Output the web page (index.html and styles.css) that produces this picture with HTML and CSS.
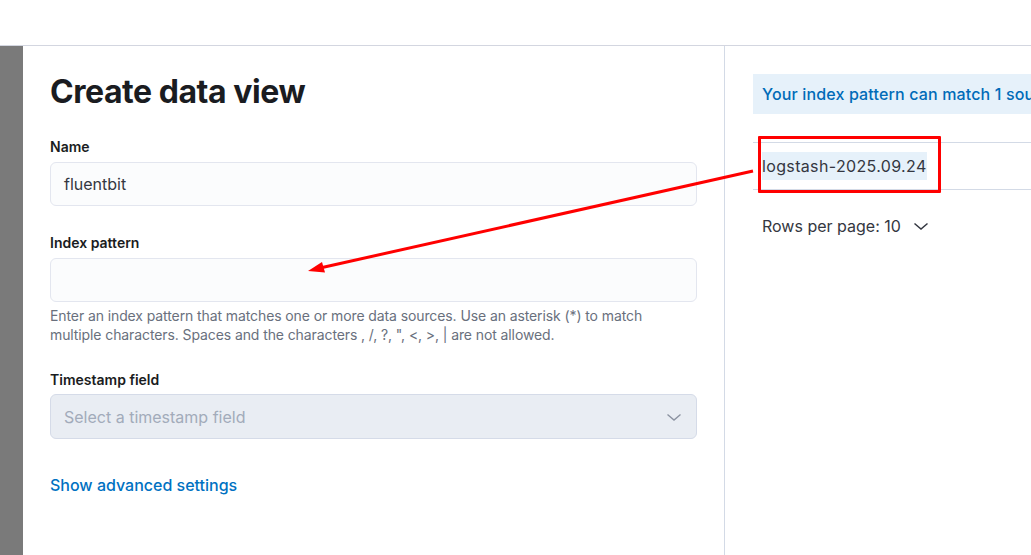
FILE: index.html
```html
<!DOCTYPE html>
<html>
<head>
<meta charset="utf-8">
<link rel="stylesheet" href="styles.css">
</head>
<body>
<div class="topbar"></div>
<div class="main">
  <div class="gutter"></div>
  <div class="panel">
    <div class="left">
      <h1 class="title">Create data view</h1>
      <div class="field first">
        <div class="label">Name</div>
        <div class="input">fluentbit</div>
      </div>
      <div class="field">
        <div class="label">Index pattern</div>
        <div class="input"></div>
        <div class="help">Enter an index pattern that matches one or more data sources. Use an asterisk (*) to match<br>multiple characters. Spaces and the characters , /, ?, ", &lt;, &gt;, | are not allowed.</div>
      </div>
      <div class="field ts">
        <div class="label">Timestamp field</div>
        <div class="select">
          <span>Select a timestamp field</span>
          <svg class="chev" width="16" height="16" viewBox="0 0 16 16"><path d="M1.5 5.5 L8 11 L14.5 5.5" fill="none" stroke="#8c93a1" stroke-width="1.4"/></svg>
        </div>
      </div>
      <a class="link">Show advanced settings</a>
    </div>
    <div class="right">
      <div class="callout">Your index pattern can match 1 source.</div>
      <div class="table">
        <div class="row"><span class="hl">logstash-2025.09.24</span></div>
      </div>
      <div class="rows">Rows per page: 10
        <svg class="chev2" width="16" height="16" viewBox="0 0 16 16"><path d="M1.5 5.5 L8 11 L14.5 5.5" fill="none" stroke="#343741" stroke-width="1.5"/></svg>
      </div>
    </div>
  </div>
</div>
<div class="redbox"></div>
<svg class="arrow" width="1031" height="555" viewBox="0 0 1031 555">
  <line x1="753" y1="171" x2="320" y2="268" stroke="#ff0000" stroke-width="3"/>
  <polygon points="308,271 325,272.5 322,262" fill="#ff0000"/>
</svg>
</body>
</html>
```

FILE: styles.css
```css
* { box-sizing: border-box; }
html, body { margin: 0; padding: 0; }
body {
  width: 1031px;
  height: 555px;
  overflow: hidden;
  position: relative;
  font-family: Inter, "Liberation Sans", sans-serif;
  background: #ffffff;
  color: #343741;
}
.topbar {
  height: 46px;
  border-bottom: 1px solid #d3d6e0;
  background: #fff;
}
.main {
  display: flex;
  height: 509px;
}
.gutter {
  width: 23px;
  background: #7a7a7a;
}
.panel {
  flex: 1;
  display: flex;
  background: #fff;
  min-width: 0;
}
.left {
  width: 702px;
  border-right: 1px solid #d3dae6;
  padding: 26px 27px 0 27px;
}
.title {
  margin: 0;
  font-size: 32px;
  line-height: 40px;
  font-weight: 700;
  color: #1a1c21;
  letter-spacing: -0.45px;
}
.field { margin-top: 27px; }
.field.first { margin-top: 25px; }
.field.ts { margin-top: 26px; }
.label {
  font-size: 14px;
  line-height: 20px;
  font-weight: 600;
  color: #1a1c21;
}
.input {
  margin-top: 5px;
  height: 44px;
  border: 1px solid #e3e6ef;
  border-radius: 6px;
  background: #fbfcfd;
  padding: 0 13px;
  display: flex;
  align-items: center;
  font-size: 16px;
  color: #343741;
}
.help {
  margin-top: 4px;
  font-size: 14px;
  line-height: 19px;
  color: #69707d;
  letter-spacing: -0.1px;
}
.select {
  margin-top: 4px;
  height: 45px;
  border: 1px solid #d5dbe8;
  border-radius: 6px;
  background: #e9edf3;
  padding: 0 14px 0 13px;
  display: flex;
  align-items: center;
  justify-content: space-between;
  font-size: 16px;
  color: #a2abba;
}
.link {
  display: block;
  margin-top: 34px;
  font-size: 16px;
  line-height: 24px;
  color: #0071c2;
  font-weight: 500;
}
.right {
  flex: 1;
  min-width: 0;
  overflow: hidden;
  padding: 28px 0 0 28px;
}
.callout {
  height: 40px;
  background: #e6f1fa;
  color: #006bb8;
  font-size: 16px;
  font-weight: 500;
  letter-spacing: 0.15px;
  padding-left: 9px;
  display: flex;
  align-items: center;
  white-space: nowrap;
}
.table {
  margin-top: 28px;
  border-top: 1px solid #d3dae6;
  border-bottom: 1px solid #d3dae6;
}
.row {
  height: 46px;
  display: flex;
  align-items: center;
  padding-left: 9px;
}
.hl {
  background: #e6f1fa;
  line-height: 28px;
  font-size: 16px;
  letter-spacing: 0.35px;
  color: #343741;
}
.rows {
  margin-top: 24px;
  padding-left: 9px;
  font-size: 16px;
  line-height: 24px;
  color: #343741;
  display: flex;
  align-items: center;
}
.chev2 { margin-left: 12px; }
.redbox {
  position: absolute;
  left: 758px;
  top: 136px;
  width: 183px;
  height: 57px;
  border: 3px solid #ff0000;
  border-radius: 1px;
}
.arrow {
  position: absolute;
  left: 0;
  top: 0;
  pointer-events: none;
}
```
